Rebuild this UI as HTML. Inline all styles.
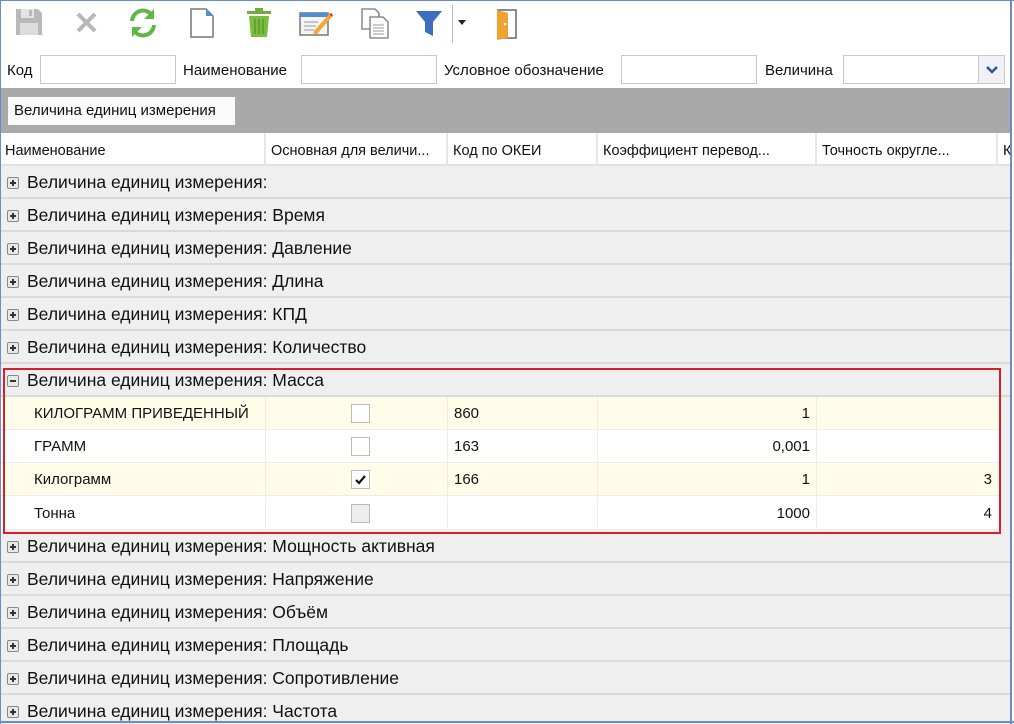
<!DOCTYPE html>
<html><head><meta charset="utf-8"><style>
*{box-sizing:border-box;margin:0;padding:0}
body{width:1014px;height:724px;overflow:hidden;background:#fff;font-family:"Liberation Sans","DejaVu Sans",sans-serif;color:#111;position:relative}
.frame{position:absolute;left:0;top:0;width:1014px;height:724px;overflow:hidden}
.bl{position:absolute;background:#6a8cc8}
.ic{position:absolute;top:7px}
.flt{position:absolute;top:62px;font-size:15px}
.in{position:absolute;top:55px;height:29px;border:1px solid #c8c8c8;background:#fff}
.bar{position:absolute;left:0;top:88px;width:1010px;height:45px;background:#a9a9a9}
.chip{position:absolute;left:8px;top:97px;width:227px;height:28px;background:#fafafa;font-size:15px;line-height:28px;padding-left:6px}
.hdr{position:absolute;left:0;top:133px;width:1010px;height:33px;background:#fff;border-bottom:2px solid #e2e2e2}
.hdr div{position:absolute;top:0;height:33px;line-height:36px;font-size:14.5px;padding-left:5px;border-right:2px solid #e6e6e6;white-space:nowrap;overflow:hidden}
.row{position:absolute;left:0;width:1000px;height:33px}
.g{background:#efefef;border-bottom:2px solid #dadada;font-size:17.5px;line-height:33px;padding-left:27px;width:1010px}
.pm{position:absolute;left:7px;top:11px;width:12px;height:12px;border:1px solid #888;background:#e8e8e8;border-radius:2px}
.pm:before{content:"";position:absolute;left:2px;top:4px;width:6px;height:2px;background:#333}
.pm.p:after{content:"";position:absolute;left:4px;top:2px;width:2px;height:6px;background:#333}
.d{border-bottom:1px solid #ececec;font-size:15px;line-height:33px}
.d.y{background:#fffdea}
.d div{position:absolute;top:0;height:33px;border-right:1px solid #ececec}
.cb{position:absolute;left:85px;top:7px;width:19px;height:19px;border:1px solid #bbb;background:#fff}
.red{position:absolute;left:3px;top:368px;width:998px;height:166px;border:2.5px solid #d9202a}
.sb{position:absolute;left:1000px;top:397px;width:10px;height:133px;background:#efefef}
</style></head><body>
<div class="frame">
<svg class="ic" style="left:14px" width="30" height="30" viewBox="0 0 30 30"><path d="M2 2h22l4 4v22H2z" fill="#b9b9b9"/><rect x="7" y="2" width="13" height="9" fill="#e4e4e4"/><rect x="15" y="3" width="3" height="6" fill="#b9b9b9"/><rect x="6" y="16" width="18" height="12" fill="#dcdcdc"/></svg>
<svg class="ic" style="left:74px" width="26" height="30" viewBox="0 0 26 30"><path d="M4 7l17 17M21 7L4 24" stroke="#b7b7b7" stroke-width="4"/></svg>
<svg class="ic" style="left:127px" width="32" height="32" viewBox="0 0 32 32"><path d="M5 14a11 11 0 0 1 19-7" stroke="#5fb746" stroke-width="4" fill="none"/><path d="M27 2v10h-10z" fill="#5fb746"/><path d="M27 18a11 11 0 0 1-19 7" stroke="#5fb746" stroke-width="4" fill="none"/><path d="M5 30V20h10z" fill="#5fb746"/></svg>
<svg class="ic" style="left:188px" width="28" height="32" viewBox="0 0 28 32"><path d="M3 2h15l7 7v21H3z" fill="#fff" stroke="#777" stroke-width="1.5"/><path d="M18 2v7h7z" fill="#4a8fd8"/></svg>
<svg class="ic" style="left:244px" width="30" height="32" viewBox="0 0 30 32"><rect x="3" y="4" width="24" height="3" fill="#6fae3a"/><rect x="11" y="1" width="8" height="3" fill="#6fae3a"/><path d="M5 9h20l-2 21H7z" fill="#7cbc40"/><path d="M11 12v15M15 12v15M19 12v15" stroke="#5a9a2c" stroke-width="1.5"/></svg>
<svg class="ic" style="left:298px" width="36" height="32" viewBox="0 0 36 32"><rect x="2" y="6" width="28" height="22" fill="#f4f4f4" stroke="#777" stroke-width="1.5"/><rect x="2" y="6" width="28" height="4" fill="#4a8fd8"/><path d="M6 15h14M6 19h12M6 23h10" stroke="#999"/><path d="M16 24l15-17 3 3-15 17-4 1z" fill="#f3a73b"/><path d="M31 7l3 3 1-2-2-2z" fill="#d33"/></svg>
<svg class="ic" style="left:360px" width="30" height="32" viewBox="0 0 30 32"><path d="M2 2h13l4 4v16H2z" fill="#fff" stroke="#777" stroke-width="1.3"/><path d="M10 10h13l5 5v16H10z" fill="#fff" stroke="#777" stroke-width="1.3"/><path d="M13 18h11M13 21h11M13 24h11M13 27h11" stroke="#999"/></svg>
<svg class="ic" style="left:414px" width="30" height="32" viewBox="0 0 30 32"><path d="M2 4h26l-9 11v14l-8-4V15z" fill="#3e6cc0"/></svg>
<div style="position:absolute;left:452px;top:5px;width:1px;height:38px;background:#bbb"></div>
<svg class="ic" style="left:458px;top:20px" width="8" height="6"><path d="M0 0h8l-4 5z" fill="#222"/></svg>
<svg class="ic" style="left:492px" width="30" height="34" viewBox="0 0 30 34"><rect x="6" y="3" width="18" height="28" fill="#fff" stroke="#666" stroke-width="1.5"/><path d="M5 3l11 3v25l-11 2z" fill="#f0a230"/><circle cx="13" cy="17" r="1.3" fill="#fff"/></svg>
<div class="flt" style="left:7px">Код</div>
<div class="in" style="left:40px;width:136px"></div>
<div class="flt" style="left:183px">Наименование</div>
<div class="in" style="left:301px;width:136px"></div>
<div class="flt" style="left:444px">Условное обозначение</div>
<div class="in" style="left:621px;width:136px"></div>
<div class="flt" style="left:765px">Величина</div>
<div class="in" style="left:843px;width:162px"><div style="position:absolute;right:0;top:0;width:26px;height:27px;background:#eef1f6;border-left:1px solid #ccc"><svg width="26" height="27"><path d="M8 11l5 5 5-5" stroke="#2a55a0" stroke-width="2.5" fill="none"/></svg></div></div>
<div class="bar"></div>
<div class="chip">Величина единиц измерения</div>
<div class="hdr">
<div style="left:0;width:266px">Наименование</div>
<div style="left:266px;width:182px">Основная для величи...</div>
<div style="left:448px;width:150px">Код по ОКЕИ</div>
<div style="left:598px;width:219px">Коэффициент перевод...</div>
<div style="left:817px;width:181px">Точность округле...</div>
<div style="left:998px;width:20px;border:none">К</div>
</div>
<div class="row g" style="top:166px"><span class="pm p"></span>Величина единиц измерения:</div>
<div class="row g" style="top:199px"><span class="pm p"></span>Величина единиц измерения: Время</div>
<div class="row g" style="top:232px"><span class="pm p"></span>Величина единиц измерения: Давление</div>
<div class="row g" style="top:265px"><span class="pm p"></span>Величина единиц измерения: Длина</div>
<div class="row g" style="top:298px"><span class="pm p"></span>Величина единиц измерения: КПД</div>
<div class="row g" style="top:331px"><span class="pm p"></span>Величина единиц измерения: Количество</div>
<div class="row g" style="top:364px"><span class="pm"></span>Величина единиц измерения: Масса</div>
<div class="row d y" style="top:397px"><div style="left:0;width:266px;padding-left:34px">КИЛОГРАММ ПРИВЕДЕННЫЙ</div><div style="left:266px;width:182px"><span class="cb"></span></div><div style="left:448px;width:150px;padding-left:6px">860</div><div style="left:598px;width:219px;text-align:right;padding-right:6px">1</div><div style="left:817px;width:183px;border:none"></div></div>
<div class="row d" style="top:430px"><div style="left:0;width:266px;padding-left:34px">ГРАММ</div><div style="left:266px;width:182px"><span class="cb"></span></div><div style="left:448px;width:150px;padding-left:6px">163</div><div style="left:598px;width:219px;text-align:right;padding-right:6px">0,001</div><div style="left:817px;width:183px;border:none"></div></div>
<div class="row d y" style="top:463px"><div style="left:0;width:266px;padding-left:34px">Килограмм</div><div style="left:266px;width:182px"><span class="cb"><svg width="17" height="17" style="position:absolute;left:0;top:0"><path d="M4 9l3 3 6-7" stroke="#111" stroke-width="2.2" fill="none"/></svg></span></div><div style="left:448px;width:150px;padding-left:6px">166</div><div style="left:598px;width:219px;text-align:right;padding-right:6px">1</div><div style="left:817px;width:183px;text-align:right;padding-right:8px;border:none">3</div></div>
<div class="row d" style="top:497px"><div style="left:0;width:266px;padding-left:34px">Тонна</div><div style="left:266px;width:182px"><span class="cb" style="background:#eee"></span></div><div style="left:448px;width:150px"></div><div style="left:598px;width:219px;text-align:right;padding-right:6px">1000</div><div style="left:817px;width:183px;text-align:right;padding-right:8px;border:none">4</div></div>
<div class="sb"></div>
<div class="row g" style="top:530px"><span class="pm p"></span>Величина единиц измерения: Мощность активная</div>
<div class="row g" style="top:563px"><span class="pm p"></span>Величина единиц измерения: Напряжение</div>
<div class="row g" style="top:596px"><span class="pm p"></span>Величина единиц измерения: Объём</div>
<div class="row g" style="top:629px"><span class="pm p"></span>Величина единиц измерения: Площадь</div>
<div class="row g" style="top:662px"><span class="pm p"></span>Величина единиц измерения: Сопротивление</div>
<div class="row g" style="top:695px"><span class="pm p"></span>Величина единиц измерения: Частота</div>
<div class="red"></div>
<div class="bl" style="left:0;top:0;width:1014px;height:1px"></div>
<div class="bl" style="left:0;top:0;width:1px;height:724px"></div>
<div class="bl" style="left:1010px;top:0;width:2px;height:724px"></div>
<div class="bl" style="left:0;top:721px;width:1014px;height:2px"></div>
</div>
</body></html>
